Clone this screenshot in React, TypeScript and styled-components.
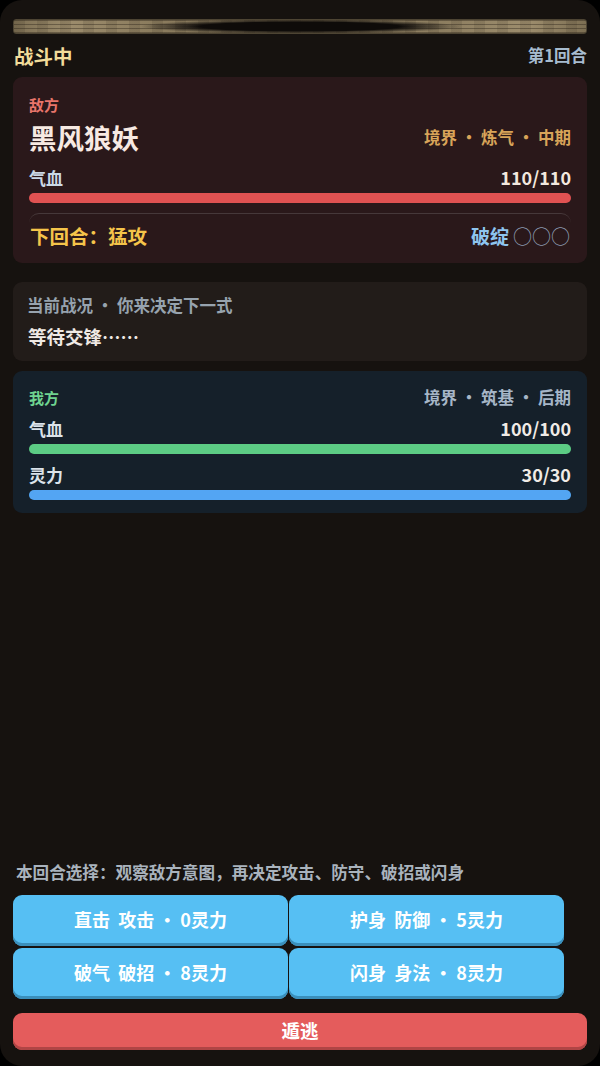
import React from "react";
import styled, { createGlobalStyle } from "styled-components";

const Global = createGlobalStyle`
  html, body { margin: 0; padding: 0; background: #000; }
  body { font-family: "Noto Sans CJK SC", "Noto Sans", sans-serif; }
  * { box-sizing: border-box; }
`;

const Screen = styled.div`
  width: 600px;
  height: 1066px;
  background: #16120f;
  border-radius: 22px;
  padding: 19px 13px 16px;
  display: flex;
  flex-direction: column;
  font-weight: 700;
  overflow: hidden;
`;

const ScrollBar = styled.div`
  height: 15px;
  border-radius: 3px;
  border: 1px solid #4d4433;
  background:
    radial-gradient(ellipse 28% 56% at 50% 50%, #0e0b09 62%, rgba(14, 11, 9, 0) 100%),
    repeating-linear-gradient(0deg, rgba(40, 32, 22, 0.4) 0 1px, rgba(0, 0, 0, 0) 1px 4px),
    repeating-linear-gradient(90deg, rgba(40, 32, 22, 0.12) 0 11px, rgba(0, 0, 0, 0) 11px 23px),
    linear-gradient(90deg, #7d6f53 0%, #9c8c6c 10%, #8a7b5d 25%, #8d7e60 75%, #9d8d6d 90%, #7d6f53 100%);
`;

const TitleRow = styled.div`
  display: flex;
  justify-content: space-between;
  align-items: center;
  margin-top: 8px;
  height: 26px;
`;

const Title = styled.div`
  font-size: 19.5px;
  color: #f2dc9b;
  padding-left: 1px;
`;

const Round = styled.div`
  font-size: 16.5px;
  color: #a7bccf;
`;

const Card = styled.div<{ $bg: string; $mt: number; $pad: string }>`
  background: ${(p) => p.$bg};
  border-radius: 9px;
  margin-top: ${(p) => p.$mt}px;
  padding: ${(p) => p.$pad};
`;

const Row = styled.div<{ $mt?: number; $h: number }>`
  display: flex;
  justify-content: space-between;
  align-items: center;
  margin-top: ${(p) => p.$mt ?? 0}px;
  height: ${(p) => p.$h}px;
`;

const Text = styled.span<{ $size: number; $color: string }>`
  font-size: ${(p) => p.$size}px;
  color: ${(p) => p.$color};
  white-space: nowrap;
  display: inline-flex;
  align-items: center;
`;

const Bar = styled.div<{ $color: string; $mt: number; $h: number }>`
  height: ${(p) => p.$h}px;
  margin-top: ${(p) => p.$mt}px;
  border-radius: 6px;
  background: ${(p) => p.$color};
`;

const Divider = styled.div`
  margin-top: 10px;
  border-top: 1px solid #46383a;
  border-radius: 10px;
  padding: 7px 1px 0 1px;
`;

const Circles = styled.span`
  font-size: 19px;
  color: #8c9bb0;
  font-weight: 400;
  margin-left: 4px;
`;

const StatusLine = styled.div<{ $size: number; $color: string; $mt?: number; $h: number; $indent?: number }>`
  font-size: ${(p) => p.$size}px;
  color: ${(p) => p.$color};
  margin-top: ${(p) => p.$mt ?? 0}px;
  height: ${(p) => p.$h}px;
  line-height: ${(p) => p.$h}px;
  padding-left: ${(p) => p.$indent ?? 0}px;
  white-space: nowrap;
`;

const Spacer = styled.div`
  flex: 1;
`;

const Hint = styled.div`
  font-size: 16.6px;
  color: #a9b3bd;
  height: 22px;
  line-height: 22px;
  padding-left: 3px;
  white-space: nowrap;
`;

const ActionGrid = styled.div`
  display: grid;
  grid-template-columns: 275px 275px;
  column-gap: 1px;
  row-gap: 2px;
  margin-top: 12px;
`;

const ActionButton = styled.button`
  height: 51px;
  border: none;
  border-radius: 9px;
  background: #56bff3;
  box-shadow: inset 0 -3px 0 #3a8fbb;
  color: #fff;
  font-family: inherit;
  font-weight: 700;
  font-size: 18px;
  padding: 0 0 3px;
  white-space: pre;
`;

const FleeButton = styled.button`
  margin-top: 14px;
  height: 37px;
  border: none;
  border-radius: 9px;
  background: #e45c5c;
  box-shadow: inset 0 -3px 0 #b04545;
  color: #fff;
  font-family: inherit;
  font-weight: 700;
  font-size: 18.5px;
  padding: 0 0 3px;
`;

const actions = [
  "直击  攻击 · 0灵力",
  "护身  防御 · 5灵力",
  "破气  破招 · 8灵力",
  "闪身  身法 · 8灵力",
];

export default function App() {
  return (
    <>
      <Global />
      <Screen>
        <ScrollBar />
        <TitleRow>
          <Title>战斗中</Title>
          <Round>第1回合</Round>
        </TitleRow>

        <Card $bg="#2a181a" $mt={9} $pad="17px 16px 14px">
          <Row $h={20}>
            <Text $size={15} $color="#e8756b">敌方</Text>
          </Row>
          <Row $mt={6} $h={34}>
            <Text $size={27.5} $color="#f7e9e2">黑风狼妖</Text>
            <Text $size={16.5} $color="#d8a459">境界 · 炼气 · 中期</Text>
          </Row>
          <Row $mt={11} $h={24}>
            <Text $size={17} $color="#cad8e6">气血</Text>
            <Text $size={18} $color="#f3e8df">110/110</Text>
          </Row>
          <Bar $color="#e05252" $mt={4} $h={10} />
          <Divider>
            <Row $h={28}>
              <Text $size={19.5} $color="#f5c44a">下回合：猛攻</Text>
              <Text $size={19} $color="#8ec5ef">
                破绽<Circles>○○○</Circles>
              </Text>
            </Row>
          </Divider>
        </Card>

        <Card $bg="#221c19" $mt={19} $pad="13px 14px 13px">
          <StatusLine $size={16.5} $color="#97a3ae" $h={20} $indent={-1}>当前战况 · 你来决定下一式</StatusLine>
          <StatusLine $size={18.5} $color="#efe9e4" $mt={9} $h={24} $indent={1}>等待交锋……</StatusLine>
        </Card>

        <Card $bg="#15202a" $mt={10} $pad="16px 16px 13px">
          <Row $h={20}>
            <Text $size={15} $color="#6fd490">我方</Text>
            <Text $size={16.5} $color="#a6b6c7">境界 · 筑基 · 后期</Text>
          </Row>
          <Row $mt={10} $h={22}>
            <Text $size={17} $color="#dbe3ea">气血</Text>
            <Text $size={18} $color="#f0ebe6">100/100</Text>
          </Row>
          <Bar $color="#5ccc84" $mt={5} $h={10} />
          <Row $mt={9} $h={22}>
            <Text $size={17} $color="#dbe3ea">灵力</Text>
            <Text $size={18} $color="#f0ebe6">30/30</Text>
          </Row>
          <Bar $color="#53a5f3" $mt={5} $h={10} />
        </Card>

        <Spacer />

        <Hint>本回合选择：观察敌方意图，再决定攻击、防守、破招或闪身</Hint>
        <ActionGrid>
          {actions.map((a) => (
            <ActionButton key={a}>{a}</ActionButton>
          ))}
        </ActionGrid>
        <FleeButton>遁逃</FleeButton>
      </Screen>
    </>
  );
}
